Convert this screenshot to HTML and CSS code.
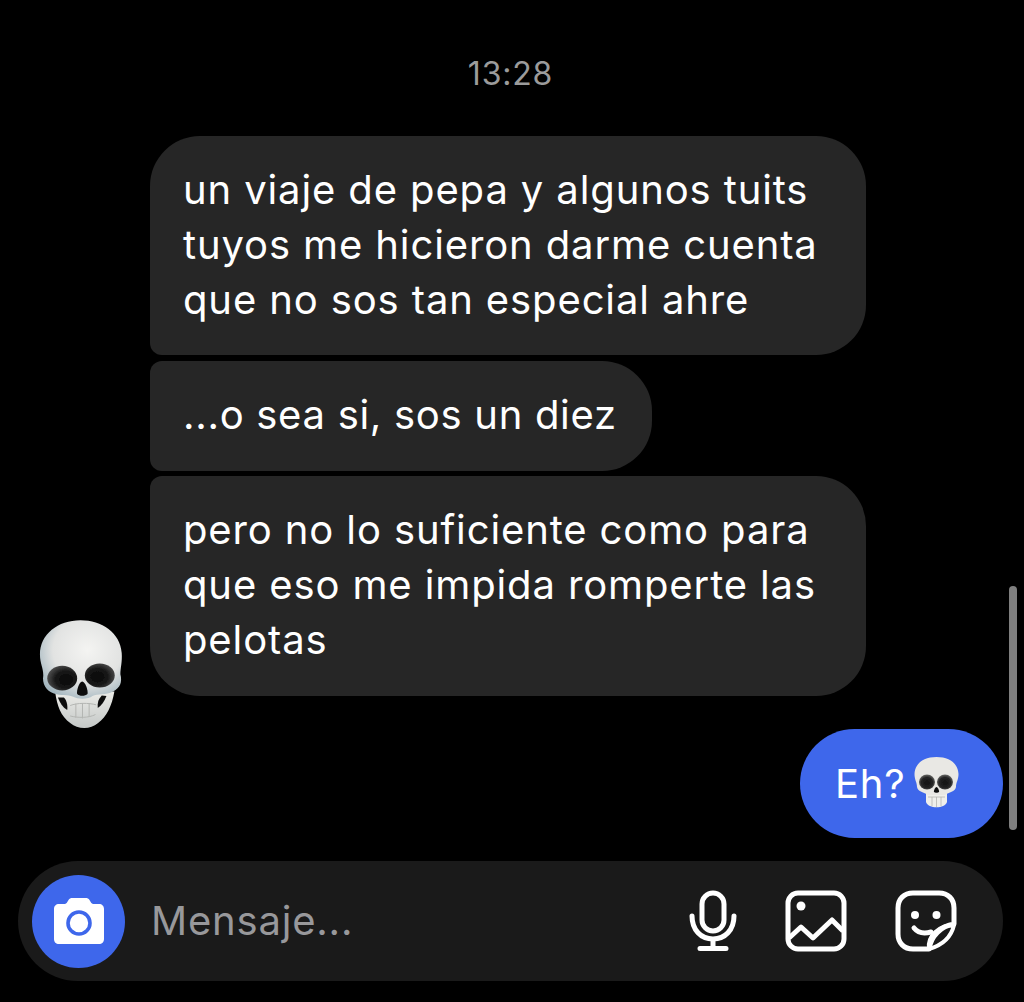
FILE: index.html
```html
<!DOCTYPE html>
<html lang="es">
<head>
<meta charset="utf-8">
<title>Mensajes</title>
<link rel="stylesheet" href="styles.css">
</head>
<body>
<svg class="defs" width="0" height="0" aria-hidden="true">
  <defs>
    <radialGradient id="boneBig" cx="58%" cy="38%" r="68%">
      <stop offset="0" stop-color="#f4f4f2"/>
      <stop offset=".62" stop-color="#e2e3e2"/>
      <stop offset="1" stop-color="#a3b6bf"/>
    </radialGradient>
    <radialGradient id="eyeLeft" cx="62%" cy="56%" r="62%">
      <stop offset="0" stop-color="#080808"/>
      <stop offset=".55" stop-color="#161616"/>
      <stop offset="1" stop-color="#4c4c4c"/>
    </radialGradient>
    <radialGradient id="eyeRight" cx="42%" cy="56%" r="62%">
      <stop offset="0" stop-color="#080808"/>
      <stop offset=".55" stop-color="#161616"/>
      <stop offset="1" stop-color="#4c4c4c"/>
    </radialGradient>
    <linearGradient id="jawBig" x1="0" y1="0" x2="0" y2="1">
      <stop offset="0" stop-color="#ecece8"/>
      <stop offset="1" stop-color="#c4c8c7"/>
    </linearGradient>
    <radialGradient id="eyeSmall" cx="50%" cy="55%" r="55%">
      <stop offset="0" stop-color="#101010"/>
      <stop offset=".65" stop-color="#242424"/>
      <stop offset="1" stop-color="#6a6a68"/>
    </radialGradient>
    <filter id="soft" x="-5%" y="-5%" width="110%" height="110%">
      <feGaussianBlur stdDeviation="2.200"/>
    </filter>
    <filter id="softSmall" x="-5%" y="-5%" width="110%" height="110%">
      <feGaussianBlur stdDeviation=".35"/>
    </filter>
  </defs>
</svg>
<main class="chat">
  <div class="time">13:28</div>
  <div class="thread">
    <div class="incoming">
      <svg class="avatar-skull" viewBox="50 55 260 340" aria-hidden="true">
        <g filter="url(#soft)">
          <path d="M104 280C110 320 120 350 150 372C170 390 210 392 232 372C260 350 274 320 282 276Z" fill="url(#jawBig)"/>
          <path d="M180 62C112 62 58 104 58 165C58 192 68 205 68 228C64 252 76 274 100 282C122 290 140 284 158 292C172 300 204 300 216 290C232 282 256 288 278 276C300 264 306 248 300 224C300 204 306 188 304 160C300 100 244 62 180 62Z" fill="url(#boneBig)"/>
          <ellipse cx="125" cy="236" rx="45" ry="37" fill="url(#eyeLeft)"/>
          <ellipse cx="238" cy="228" rx="45" ry="36" fill="url(#eyeRight)"/>
          <path d="M185 246C176 246 167 276 170 284C176 291 194 291 201 284C204 274 194 246 185 246Z" fill="#0b0b0b"/>
          <path d="M112 294C118 310 126 324 140 332C142 316 138 302 130 294Z" fill="#101010"/>
          <path d="M258 290C252 306 244 318 232 326C230 310 234 298 244 288Z" fill="#101010"/>
          <path d="M150 318C170 310 205 310 226 316M150 350C172 356 205 356 224 346M166 314V354M186 312V356M206 312V352" fill="none" stroke="#b4b6b3" stroke-width="3" stroke-linecap="round"/>
        </g>
      </svg>
      <div class="stack">
        <p class="bubble wide">un viaje de pepa y algunos tuits<br>tuyos me hicieron darme cuenta<br>que no sos tan especial ahre</p>
        <p class="bubble middle">...o sea si, sos un diez</p>
        <p class="bubble wide last">pero no lo suficiente como para<br>que eso me impida romperte las<br>pelotas</p>
      </div>
    </div>
    <div class="outgoing">
      <p class="bubble sent">Eh?<svg class="inline-skull" viewBox="0 0 45 53" aria-hidden="true">
        <g filter="url(#softSmall)">
          <path d="M12 34H33V46C31 53 14 53 12 46Z" fill="#efefeb"/>
          <path d="M22.500 1C10 1 1 7 .5 18C.5 24 3 26 3 31C4 36 10 36 14 39H31C35 36 41 36 42 31C42 26 44.500 24 44.500 18C44 7 35 1 22.500 1Z" fill="#e9e8e4"/>
          <ellipse cx="13" cy="26" rx="8" ry="7.500" fill="url(#eyeSmall)"/>
          <ellipse cx="31" cy="26" rx="8" ry="7.500" fill="url(#eyeSmall)"/>
          <path d="M22.500 31C21 31 19.500 35 20 36C21 37 24 37 25 36C25.500 35 24 31 22.500 31Z" fill="#111"/>
          <path d="M14 41H31M18 41V50M22.500 41V51M27 41V50" fill="none" stroke="#b5b5b0" stroke-width=".8"/>
        </g>
      </svg></p>
    </div>
  </div>
  <div class="composer">
    <span class="camera">
      <svg viewBox="0 0 52 48" width="52" height="48" aria-hidden="true">
        <path d="M6 7H11C12.500 7 13.500 6.400 14.300 5L15.500 3C16.500 1.400 17.500 1 19.500 1H32.500C34.500 1 35.500 1.400 36.500 3L37.700 5C38.500 6.400 39.500 7 41 7H46C49 7 51 9 51 12V42C51 45 49 47 46 47H6C3 47 1 45 1 42V12C1 9 3 7 6 7Z" fill="#fff"/>
        <circle cx="26" cy="26" r="11" fill="none" stroke="#3e67eb" stroke-width="3.600"/>
      </svg>
    </span>
    <span class="placeholder">Mensaje...</span>
    <div class="actions">
      <svg class="icon" viewBox="0 0 48 62" width="48" height="62" aria-hidden="true">
        <rect x="13" y="3" width="22" height="38" rx="11" fill="none" stroke="#fff" stroke-width="5"/>
        <path d="M3 26C3 40 12 49 24 49C36 49 45 40 45 26M24 49V58M11 58.500H37" fill="none" stroke="#fff" stroke-width="5" stroke-linecap="round"/>
      </svg>
      <svg class="icon" viewBox="0 0 62 62" width="62" height="62" aria-hidden="true">
        <rect x="3" y="3" width="56" height="56" rx="10" fill="none" stroke="#fff" stroke-width="5"/>
        <circle cx="16" cy="16" r="4.500" fill="#fff"/>
        <path d="M4 48L16 37L28 48L47 30L58 41" fill="none" stroke="#fff" stroke-width="5" stroke-linejoin="round"/>
      </svg>
      <svg class="icon" viewBox="0 0 62 62" width="62" height="62" aria-hidden="true">
        <path d="M59 34V18C59 9 53 3 44 3H18C9 3 3 9 3 18V44C3 53 9 59 18 59H34C36 46 46 36 59 34Z" fill="none" stroke="#fff" stroke-width="5" stroke-linejoin="round"/>
        <path d="M59 35C56 48 48 55 34 59C32 46 44 35 59 35Z" fill="none" stroke="#fff" stroke-width="4" stroke-linejoin="round"/>
        <circle cx="20" cy="25" r="4" fill="#fff"/>
        <circle cx="41.500" cy="25" r="4" fill="#fff"/>
        <path d="M19 38C23 43 29 44 36 42" fill="none" stroke="#fff" stroke-width="5" stroke-linecap="round"/>
      </svg>
    </div>
  </div>
  <div class="scrollbar"></div>
</main>
</body>
</html>
```

FILE: styles.css
```css
* {
  box-sizing: border-box;
}

html,
body {
  margin: 0;
  background: #000;
}

body {
  font-family: Inter, "Liberation Sans", sans-serif;
  color: #fff;
}

.defs {
  position: absolute;
}

.chat {
  position: relative;
  width: 1024px;
  height: 1002px;
  overflow: hidden;
  padding: 0 21px 0 18px;
  display: flex;
  flex-direction: column;
}

.time {
  margin-top: 57px;
  height: 34px;
  line-height: 34px;
  text-align: center;
  font-size: 32px;
  letter-spacing: 0.800px;
  color: #9b9b9b;
}

.thread {
  margin-top: 45px;
  display: flex;
  flex-direction: column;
  gap: 33px;
}

.incoming {
  display: flex;
  align-items: flex-end;
  gap: 26px;
  padding-left: 19px;
}

.avatar-skull {
  width: 87px;
  height: 113px;
  flex: none;
  margin-bottom: -35px;
}

.stack {
  display: flex;
  flex-direction: column;
  align-items: flex-start;
  gap: 6px;
}

.bubble {
  margin: 0;
  background: #262626;
  font-size: 40px;
  letter-spacing: 0.880px;
  line-height: 55px;
  padding: 26px 36px 28px 33px;
  border-radius: 12px 50px 50px 12px;
  white-space: nowrap;
}

.wide {
  width: 716px;
  border-radius: 50px 50px 50px 12px;
}

.middle {
  width: 502px;
  height: 110px;
  margin-bottom: -1px;
  letter-spacing: 0.700px;
}

.last {
  border-radius: 12px 50px 50px 50px;
  padding-bottom: 29px;
}

.outgoing {
  display: flex;
  justify-content: flex-end;
}

.sent {
  display: flex;
  align-items: center;
  height: 109px;
  width: 203px;
  padding: 0 0 0 35px;
  background: #3e67eb;
  border-radius: 55px;
  letter-spacing: 0.800px;
}

.inline-skull {
  width: 45px;
  height: 53px;
  margin-left: 8px;
  margin-top: -3px;
}

.composer {
  margin-top: 23px;
  height: 120px;
  border-radius: 60px;
  background: #1a1a1a;
  display: flex;
  align-items: center;
  padding: 0 46px 0 14px;
}

.camera {
  width: 93px;
  height: 93px;
  border-radius: 50%;
  background: #3e67eb;
  display: flex;
  align-items: center;
  justify-content: center;
  flex: none;
}

.placeholder {
  margin-left: 26px;
  margin-top: -2px;
  font-size: 40px;
  letter-spacing: 0.800px;
  color: #98989b;
  flex: 1;
}

.actions {
  display: flex;
  align-items: center;
  gap: 48px;
}

.scrollbar {
  position: absolute;
  left: 1009px;
  top: 586px;
  width: 8px;
  height: 244px;
  border-radius: 4px;
  background: #7f7f7f;
}
```
